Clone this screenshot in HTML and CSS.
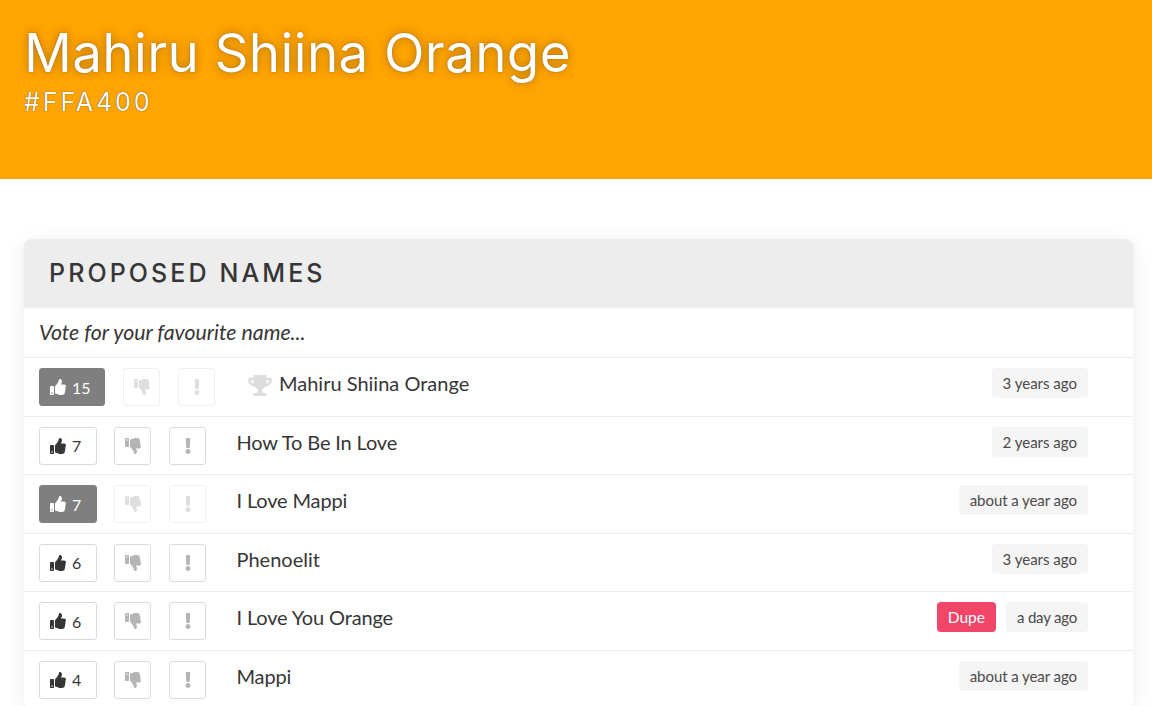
FILE: index.html
```html
<!DOCTYPE html>
<html lang="en">
<head>
<meta charset="utf-8">
<title>Mahiru Shiina Orange</title>
<link rel="stylesheet" href="styles.css">
</head>
<body>
<svg class="sprite" aria-hidden="true">
  <symbol id="up" viewBox="0 0 512 512"><path d="M104 224H24c-13.255 0-24 10.745-24 24v240c0 13.255 10.745 24 24 24h80c13.255 0 24-10.745 24-24V248c0-13.255-10.745-24-24-24zM64 472c-13.255 0-24-10.745-24-24s10.745-24 24-24 24 10.745 24 24-10.745 24-24 24zM384 81.452c0 42.416-25.97 66.208-33.277 94.548h101.723c33.397 0 59.397 27.746 59.553 58.098.084 17.938-7.546 37.249-19.439 49.197l-.11.11c9.836 23.337 8.237 56.037-9.308 79.469 8.681 25.895-.069 57.704-16.382 74.757 4.298 17.598 2.244 32.575-6.148 44.632C440.202 511.587 389.616 512 346.839 512l-2.845-.001c-48.287-.017-87.806-17.598-119.56-31.725-15.957-7.099-36.821-15.887-52.651-16.178-6.54-.12-11.783-5.457-11.783-11.998v-213.77c0-3.2 1.282-6.271 3.558-8.521 39.614-39.144 56.648-80.587 89.117-113.111 14.804-14.832 20.188-37.236 25.393-58.902C282.515 39.293 291.817 0 312 0c24 0 72 8 72 81.452z"/></symbol>
  <symbol id="down" viewBox="0 0 512 512"><path transform="matrix(1 0 0 -1 0 512)" d="M104 224H24c-13.255 0-24 10.745-24 24v240c0 13.255 10.745 24 24 24h80c13.255 0 24-10.745 24-24V248c0-13.255-10.745-24-24-24zM64 472c-13.255 0-24-10.745-24-24s10.745-24 24-24 24 10.745 24 24-10.745 24-24 24zM384 81.452c0 42.416-25.97 66.208-33.277 94.548h101.723c33.397 0 59.397 27.746 59.553 58.098.084 17.938-7.546 37.249-19.439 49.197l-.11.11c9.836 23.337 8.237 56.037-9.308 79.469 8.681 25.895-.069 57.704-16.382 74.757 4.298 17.598 2.244 32.575-6.148 44.632C440.202 511.587 389.616 512 346.839 512l-2.845-.001c-48.287-.017-87.806-17.598-119.56-31.725-15.957-7.099-36.821-15.887-52.651-16.178-6.54-.12-11.783-5.457-11.783-11.998v-213.77c0-3.2 1.282-6.271 3.558-8.521 39.614-39.144 56.648-80.587 89.117-113.111 14.804-14.832 20.188-37.236 25.393-58.902C282.515 39.293 291.817 0 312 0c24 0 72 8 72 81.452z"/></symbol>
  <symbol id="flag" viewBox="0 0 192 512"><path d="M176 432c0 44.112-35.888 80-80 80s-80-35.888-80-80 35.888-80 80-80 80 35.888 80 80zM25.26 25.199l13.6 272C39.499 309.972 50.041 320 62.83 320h66.34c12.789 0 23.331-10.028 23.97-22.801l13.6-272C167.425 11.49 156.496 0 142.77 0H49.23C35.504 0 24.575 11.49 25.26 25.199z"/></symbol>
  <symbol id="trophy" viewBox="0 0 576 512"><path d="M552 64H448V24c0-13.3-10.7-24-24-24H152c-13.3 0-24 10.7-24 24v40H24C10.7 64 0 74.7 0 88v56c0 35.7 22.5 72.4 61.9 100.7 31.5 22.7 69.8 37.1 110 41.7C203.3 338.5 240 360 240 360v72h-48c-35.3 0-64 20.7-64 56v12c0 6.6 5.4 12 12 12h296c6.6 0 12-5.4 12-12v-12c0-35.3-28.7-56-64-56h-48v-72s36.7-21.5 68.1-73.6c40.3-4.6 78.6-19 110-41.7 39.3-28.3 61.9-65 61.9-100.7V88c0-13.3-10.7-24-24-24zM99.3 192.8C74.9 175.2 64 155.6 64 144v-16h64.2c1 32.6 5.8 61.2 12.8 86.2-15.1-5.2-29.2-12.4-41.7-21.4zM512 144c0 16.1-17.7 36.1-35.3 48.8-12.5 9-26.7 16.2-41.8 21.4 7-25 11.8-53.6 12.8-86.2H512v16z"/></symbol>
</svg>

<header class="hero">
  <h1 class="hero-title">Mahiru Shiina Orange</h1>
  <p class="hero-sub">#FFA400</p>
</header>

<main class="main">
  <section class="card">
    <h2 class="card-head">Proposed Names</h2>
    <p class="prompt">Vote for your favourite name...</p>

    <div class="row row-top">
      <div class="actions">
        <button class="btn vote voted"><svg class="ico"><use href="#up"/></svg><span>15</span></button>
        <button class="btn icon-btn faded"><svg class="ico"><use href="#down"/></svg></button>
        <button class="btn icon-btn faded"><svg class="ico-flag"><use href="#flag"/></svg></button>
      </div>
      <svg class="trophy"><use href="#trophy"/></svg>
      <span class="name">Mahiru Shiina Orange</span>
      <div class="tags"><span class="tag">3 years ago</span></div>
    </div>

    <div class="row">
      <div class="actions">
        <button class="btn vote"><svg class="ico"><use href="#up"/></svg><span>7</span></button>
        <button class="btn icon-btn"><svg class="ico"><use href="#down"/></svg></button>
        <button class="btn icon-btn"><svg class="ico-flag"><use href="#flag"/></svg></button>
      </div>
      <span class="name name-tight">How To Be In Love</span>
      <div class="tags"><span class="tag">2 years ago</span></div>
    </div>

    <div class="row">
      <div class="actions">
        <button class="btn vote voted"><svg class="ico"><use href="#up"/></svg><span>7</span></button>
        <button class="btn icon-btn faded"><svg class="ico"><use href="#down"/></svg></button>
        <button class="btn icon-btn faded"><svg class="ico-flag"><use href="#flag"/></svg></button>
      </div>
      <span class="name name-tight">I Love Mappi</span>
      <div class="tags"><span class="tag tag-tight">about a year ago</span></div>
    </div>

    <div class="row">
      <div class="actions">
        <button class="btn vote"><svg class="ico"><use href="#up"/></svg><span>6</span></button>
        <button class="btn icon-btn"><svg class="ico"><use href="#down"/></svg></button>
        <button class="btn icon-btn"><svg class="ico-flag"><use href="#flag"/></svg></button>
      </div>
      <span class="name">Phenoelit</span>
      <div class="tags"><span class="tag">3 years ago</span></div>
    </div>

    <div class="row">
      <div class="actions">
        <button class="btn vote"><svg class="ico"><use href="#up"/></svg><span>6</span></button>
        <button class="btn icon-btn"><svg class="ico"><use href="#down"/></svg></button>
        <button class="btn icon-btn"><svg class="ico-flag"><use href="#flag"/></svg></button>
      </div>
      <span class="name name-tight">I Love You Orange</span>
      <div class="tags"><span class="tag tag-dupe">Dupe</span><span class="tag tag-tighter">a day ago</span></div>
    </div>

    <div class="row">
      <div class="actions">
        <button class="btn vote"><svg class="ico"><use href="#up"/></svg><span>4</span></button>
        <button class="btn icon-btn"><svg class="ico"><use href="#down"/></svg></button>
        <button class="btn icon-btn"><svg class="ico-flag"><use href="#flag"/></svg></button>
      </div>
      <span class="name name-tight">Mappi</span>
      <div class="tags"><span class="tag tag-tight">about a year ago</span></div>
    </div>
  </section>
</main>
</body>
</html>
```

FILE: styles.css
```css
* { box-sizing: border-box; }

html, body {
  margin: 0;
  height: 706px;
  overflow: hidden;
  background: #fff;
}

body {
  font-family: "Lato", "Liberation Sans", sans-serif;
  color: #363636;
  font-kerning: normal;
  text-rendering: optimizeLegibility;
}

.sprite { display: none; }

.hero {
  height: 179px;
  padding: 23px 24px 0;
  background: #ffa400;
  color: #fff;
}

.hero-title {
  margin: 0;
  font-family: "Inter", "Liberation Sans", sans-serif;
  font-size: 53px;
  font-weight: 400;
  line-height: 60px;
  letter-spacing: .35px;
  text-shadow: 0 0 10px rgba(0, 0, 0, .3), 0 0 1px rgba(0, 0, 0, .6);
}

.hero-sub {
  margin: 4px 0 0;
  font-family: "Inter", "Liberation Sans", sans-serif;
  font-size: 25px;
  font-weight: 400;
  line-height: 30px;
  letter-spacing: 2.9px;
  text-shadow: 0 0 1px rgba(0, 0, 0, .9);
}

.main {
  padding: 60px 19px 0 24px;
}

.card {
  background: #fff;
  border-radius: 8px;
  box-shadow: 0 4px 20px rgba(0, 0, 0, .08);
}

.card-head {
  margin: 0;
  height: 68px;
  padding: 0 25px;
  display: flex;
  align-items: center;
  background: #ededed;
  border-radius: 8px 8px 0 0;
  box-shadow: 0 1px 2px rgba(0, 0, 0, .08);
  font-family: "Inter", "Liberation Sans", sans-serif;
  font-size: 25px;
  font-weight: 500;
  letter-spacing: 3.1px;
  text-transform: uppercase;
}

.prompt {
  margin: 0;
  height: 50px;
  padding: 0 15px;
  display: flex;
  align-items: center;
  font-size: 21.3px;
  font-style: italic;
}

.row {
  height: 58.5px;
  padding: 10px 45px 0 15px;
  display: flex;
  align-items: flex-start;
  border-top: 1px solid #ededed;
}

.actions {
  display: flex;
  gap: 18px;
  margin-right: 30.5px;
}

.row-top .actions {
  margin-right: 33px;
}

.btn {
  height: 38px;
  padding: 0;
  display: flex;
  align-items: center;
  justify-content: center;
  background: #fff;
  border: 1px solid #dbdbdb;
  border-radius: 3px;
  color: #b5b5b5;
  font-family: inherit;
  font-size: 16px;
}

.vote {
  width: 58px;
  margin-right: -1px;
  padding-left: 10px;
  gap: 6px;
  justify-content: flex-start;
  color: #363636;
}

.voted {
  background: #7f7f7f;
  border-color: #7f7f7f;
  color: #fff;
}

.row-top .vote {
  width: 66px;
  margin-right: 0;
}

.icon-btn { width: 37px; }

.faded {
  border-color: #efefef;
  color: #dedede;
}

.ico {
  width: 16px;
  height: 16px;
  fill: currentColor;
}

.ico-flag {
  width: 6px;
  height: 16px;
  fill: currentColor;
}

.trophy {
  width: 24px;
  height: 21px;
  margin: 7px 7px 0 0;
  fill: #dcdcdc;
}

.name {
  font-size: 20px;
  line-height: 30px;
}

.name-tight { letter-spacing: -.15px; }

.tags {
  margin-left: auto;
  display: flex;
  gap: 10px;
}

.tag {
  height: 30px;
  padding: 0 11px;
  display: flex;
  align-items: center;
  background: #f5f5f5;
  border-radius: 4px;
  color: #4a4a4a;
  font-size: 15px;
}

.tag-tight { letter-spacing: -.07px; }

.tag-tighter { letter-spacing: -.2px; }

.tag-dupe {
  background: #f14668;
  color: #fff;
  font-size: 15.5px;
}
```
